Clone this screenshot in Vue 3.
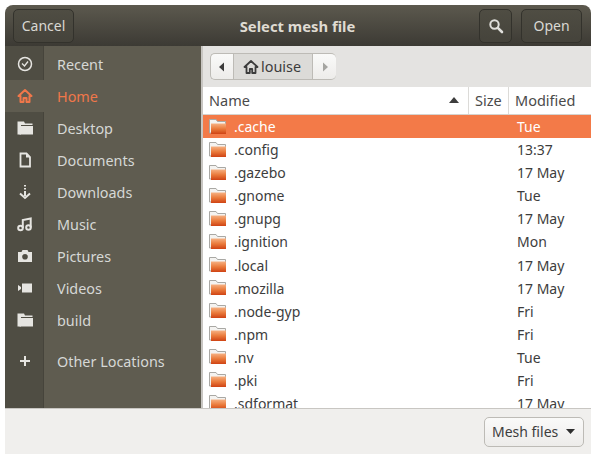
<template>
  <div class="page">
    <div class="dialog">
      <header class="titlebar">
        <div class="side">
          <button type="button" class="hbtn cancel">Cancel</button>
        </div>
        <div class="title">Select mesh file</div>
        <div class="side right">
          <button type="button" class="hbtn search" aria-label="Search">
            <svg width="16" height="16" viewBox="0 0 16 16">
              <circle cx="6.500" cy="6.500" r="4.200" fill="none" stroke="#e0dfdb" stroke-width="2" />
              <path d="M9.800 9.800 14 14" stroke="#e0dfdb" stroke-width="2.600" stroke-linecap="round" />
            </svg>
          </button>
          <button type="button" class="hbtn open">Open</button>
        </div>
      </header>

      <div class="body">
        <aside class="sidebar">
          <div
            v-for="place in places"
            :key="place.name"
            class="place"
            :class="{ active: place.name === 'Home', other: place.name === 'Other Locations' }"
          >
            <span class="place-icon">
              <svg width="16" height="16" viewBox="0 0 16 16" v-html="icons[place.icon]"></svg>
            </span>
            <span class="place-name">{{ place.name }}</span>
          </div>
        </aside>

        <main class="main">
          <div class="pathbar">
            <div class="path">
              <button type="button" class="seg arrow">
                <svg width="8" height="10" viewBox="0 0 8 10"><path d="M6 0.500v9L1 5z" fill="#3c3c3c" /></svg>
              </button>
              <button type="button" class="seg crumb">
                <svg width="16" height="16" viewBox="0 0 16 16" v-html="crumbHome"></svg>
                <span>louise</span>
              </button>
              <button type="button" class="seg arrow last">
                <svg width="8" height="10" viewBox="0 0 8 10"><path d="M2 0.500v9L7 5z" fill="#a5a5a1" /></svg>
              </button>
            </div>
          </div>

          <div class="columns">
            <div class="col col-name">
              <span>Name</span>
              <svg width="10" height="6" viewBox="0 0 10 6"><path d="M5 0l5 6H0z" fill="#3d3d3d" /></svg>
            </div>
            <div class="col col-size">Size</div>
            <div class="col col-mod">Modified</div>
          </div>

          <div class="rows">
            <div v-for="(file, i) in files" :key="file.name" class="row" :class="{ selected: i === 0 }">
              <svg class="folder" width="18" height="18" viewBox="0 0 18 18">
                <defs>
                  <linearGradient id="folderFill" x1="0" y1="0" x2="0" y2="1">
                    <stop offset="0" stop-color="#f6b183" />
                    <stop offset="0.500" stop-color="#ea7b3c" />
                    <stop offset="1" stop-color="#cf4314" />
                  </linearGradient>
                </defs>
                <path d="M0.500 15V1.500h6.500l1.500 2h8V15z" fill="#f4f3f1" stroke="#a9a8a4" />
                <rect x="2" y="5.500" width="15" height="10.500" fill="url(#folderFill)" />
              </svg>
              <span class="file-name">{{ file.name }}</span>
              <span class="file-mod">{{ file.modified }}</span>
            </div>
          </div>
        </main>
      </div>

      <footer class="footer">
        <button type="button" class="filter">
          <span>Mesh files</span>
          <svg width="9" height="5" viewBox="0 0 9 5"><path d="M0 0h9L4.500 5z" fill="#2e2e2e" /></svg>
        </button>
      </footer>
    </div>
  </div>
</template>

<script setup>
const icons = {
  clock: '<circle cx="8" cy="8" r="6.500" fill="none" stroke="#e6e5e1" stroke-width="1.500"/><path d="M5 7.500 7.500 10 11 5.500" fill="none" stroke="#e6e5e1" stroke-width="1.300"/>',
  home: '<path d="M8 2 1.500 8H3.500v6h3V10h3v4h3V8h2z" fill="none" stroke="#f0774a" stroke-width="2" stroke-linejoin="round"/>',
  folder: '<path d="M0.500 1.500h6.500l1 2h7.500v1.500H4v9.500H0.500z" fill="#e6e5e1"/><path d="M2.500 6h13.500v8.500H2.500z" fill="#e6e5e1"/>',
  doc: '<path d="M3.500 1.500h6l3.500 3.500v9.500H3.500z" fill="none" stroke="#e6e5e1" stroke-width="1.800"/><path d="M9 1.500v4h4z" fill="#e6e5e1"/>',
  download: '<path d="M8 1v1.500M8 4v1.500M8 7v5" stroke="#e6e5e1" stroke-width="2"/><path d="M3 9.500 8 14l5-4.500" fill="none" stroke="#e6e5e1" stroke-width="2"/>',
  music: '<circle cx="3.500" cy="12" r="2.300" fill="none" stroke="#e6e5e1" stroke-width="2"/><circle cx="11.500" cy="11.500" r="2.300" fill="none" stroke="#e6e5e1" stroke-width="2"/><path d="M5.800 12V4l7.900-1.500v9" fill="none" stroke="#e6e5e1" stroke-width="2"/>',
  camera: '<path d="M1 4h3.500l1-2h5l1 2H15v10H1z" fill="#e6e5e1"/><circle cx="8" cy="8.800" r="2.800" fill="#4f4d43"/>',
  video: '<path d="M5 3.500h10v9H5zM1 5l3 2v2l-3 2z" fill="#e6e5e1"/>',
  plus: '<path d="M8 3v10M3 8h10" stroke="#e6e5e1" stroke-width="2"/>'
}

const crumbHome = '<path d="M8 2 1.500 8H3.500v6h3.300v-4h2.400v4h3.300V8h2z" fill="none" stroke="#3c3c3c" stroke-width="1.800" stroke-linejoin="round"/>'

const places = [
  { name: 'Recent', icon: 'clock' },
  { name: 'Home', icon: 'home' },
  { name: 'Desktop', icon: 'folder' },
  { name: 'Documents', icon: 'doc' },
  { name: 'Downloads', icon: 'download' },
  { name: 'Music', icon: 'music' },
  { name: 'Pictures', icon: 'camera' },
  { name: 'Videos', icon: 'video' },
  { name: 'build', icon: 'folder' },
  { name: 'Other Locations', icon: 'plus' }
]

const files = [
  { name: '.cache', modified: 'Tue' },
  { name: '.config', modified: '13:37' },
  { name: '.gazebo', modified: '17 May' },
  { name: '.gnome', modified: 'Tue' },
  { name: '.gnupg', modified: '17 May' },
  { name: '.ignition', modified: 'Mon' },
  { name: '.local', modified: '17 May' },
  { name: '.mozilla', modified: '17 May' },
  { name: '.node-gyp', modified: 'Fri' },
  { name: '.npm', modified: 'Fri' },
  { name: '.nv', modified: 'Tue' },
  { name: '.pki', modified: 'Fri' },
  { name: '.sdformat', modified: '17 May' }
]
</script>

<style>
html,
body {
  background: #fff;
}
</style>

<style scoped>
.page {
  box-sizing: border-box;
  width: 600px;
  height: 463px;
  padding: 5px 9px 9px 5px;
  font-family: "Noto Sans", "Open Sans", sans-serif;
  font-size: 14px;
  background: #fff;
}
.dialog {
  display: flex;
  flex-direction: column;
  height: 100%;
  overflow: hidden;
  border-radius: 8px 8px 0 0;
}
button {
  font: inherit;
  padding: 0;
  cursor: pointer;
}
.titlebar {
  flex: none;
  display: grid;
  grid-template-columns: 1fr auto 1fr;
  align-items: center;
  height: 41px;
  padding: 0 9px 0 8px;
  box-sizing: border-box;
  background: linear-gradient(#5c594e, #3c3a34);
}
.side {
  display: flex;
  gap: 9px;
}
.side.right {
  justify-content: flex-end;
}
.title {
  color: #dfdbd2;
  font-weight: 700;
  font-size: 14.800px;
}
.hbtn {
  height: 34px;
  border: 1px solid #33322c;
  border-radius: 5px;
  background: linear-gradient(#4f4d43, #45433b);
  color: #d9d8d3;
}
.cancel,
.open {
  width: 61px;
}
.search {
  display: flex;
  align-items: center;
  justify-content: center;
  width: 33px;
}
.body {
  flex: 1;
  min-height: 0;
  display: flex;
}
.sidebar {
  flex: none;
  width: 196px;
  padding-top: 2px;
  box-sizing: border-box;
  background: linear-gradient(90deg, #4f4d43 38px, #46443b 38px, #46443b 39px, #5f5c50 39px);
  color: #d6d8d6;
  font-size: 14.400px;
}
.place {
  display: flex;
  align-items: center;
  height: 32px;
}
.place.active {
  background: #5f5c50;
  color: #f0774a;
}
.place.other {
  margin-top: 9px;
}
.place-icon {
  display: flex;
  justify-content: center;
  width: 39px;
  flex: none;
  margin-right: 13px;
}
.main {
  flex: 1;
  min-width: 0;
  display: flex;
  flex-direction: column;
  border-left: 2px solid #c8c6c2;
  background: #fff;
}
.pathbar {
  flex: none;
  height: 41px;
  padding: 7px 0 0 7px;
  box-sizing: border-box;
  background: #e4e3e1;
}
.path {
  display: flex;
  width: 126px;
  height: 27px;
}
.seg {
  display: flex;
  align-items: center;
  justify-content: center;
  border: 1px solid #bdbbb6;
  background: linear-gradient(#fafaf9, #edecea);
  color: #3c3c3c;
}
.arrow {
  width: 23px;
  border-radius: 5px 0 0 5px;
  border-right: 0;
}
.arrow.last {
  border-radius: 0 5px 5px 0;
  border-left: 0;
}
.crumb {
  flex: 1;
  justify-content: flex-start;
  gap: 2px;
  padding-left: 9px;
  background: #dcdbd8;
  border-color: #bdbbb6;
  font-size: 14.400px;
}
.columns {
  flex: none;
  display: flex;
  height: 28px;
  box-sizing: border-box;
  border-bottom: 1px solid #d5d3cf;
  background: #fff;
  color: #4a4a4a;
  font-size: 14.500px;
}
.col {
  display: flex;
  align-items: center;
  box-sizing: border-box;
  padding-bottom: 2px;
}
.col-name {
  width: 266px;
  justify-content: space-between;
  padding-left: 6px;
  padding-right: 9px;
  border-right: 1px solid #dcdbd8;
}
.col-size {
  width: 40px;
  padding-left: 6px;
  border-right: 1px solid #dcdbd8;
}
.col-mod {
  flex: 1;
  padding-left: 6px;
}
.rows {
  flex: 1;
  min-height: 0;
  overflow: hidden;
  color: #3d3d3d;
}
.row {
  display: flex;
  align-items: center;
  height: 23.080px;
}
.row.selected {
  background: #f37a48;
  color: #fff;
}
.folder {
  flex: none;
  margin: 0 7px 0 6px;
}
.file-name {
  flex: 1;
}
.file-mod {
  flex: none;
  width: 74px;
}
.footer {
  flex: none;
  display: flex;
  justify-content: flex-end;
  align-items: center;
  height: 46px;
  box-sizing: border-box;
  padding-right: 7px;
  border-top: 1px solid #c8c6c2;
  background: #f0efed;
}
.filter {
  display: flex;
  align-items: center;
  justify-content: space-between;
  width: 100px;
  height: 30px;
  padding: 0 8px 0 7px;
  box-sizing: border-box;
  border: 1px solid #bdbbb6;
  border-radius: 5px;
  background: linear-gradient(#fafaf9, #edecea);
  color: #3d3d3d;
}
</style>
